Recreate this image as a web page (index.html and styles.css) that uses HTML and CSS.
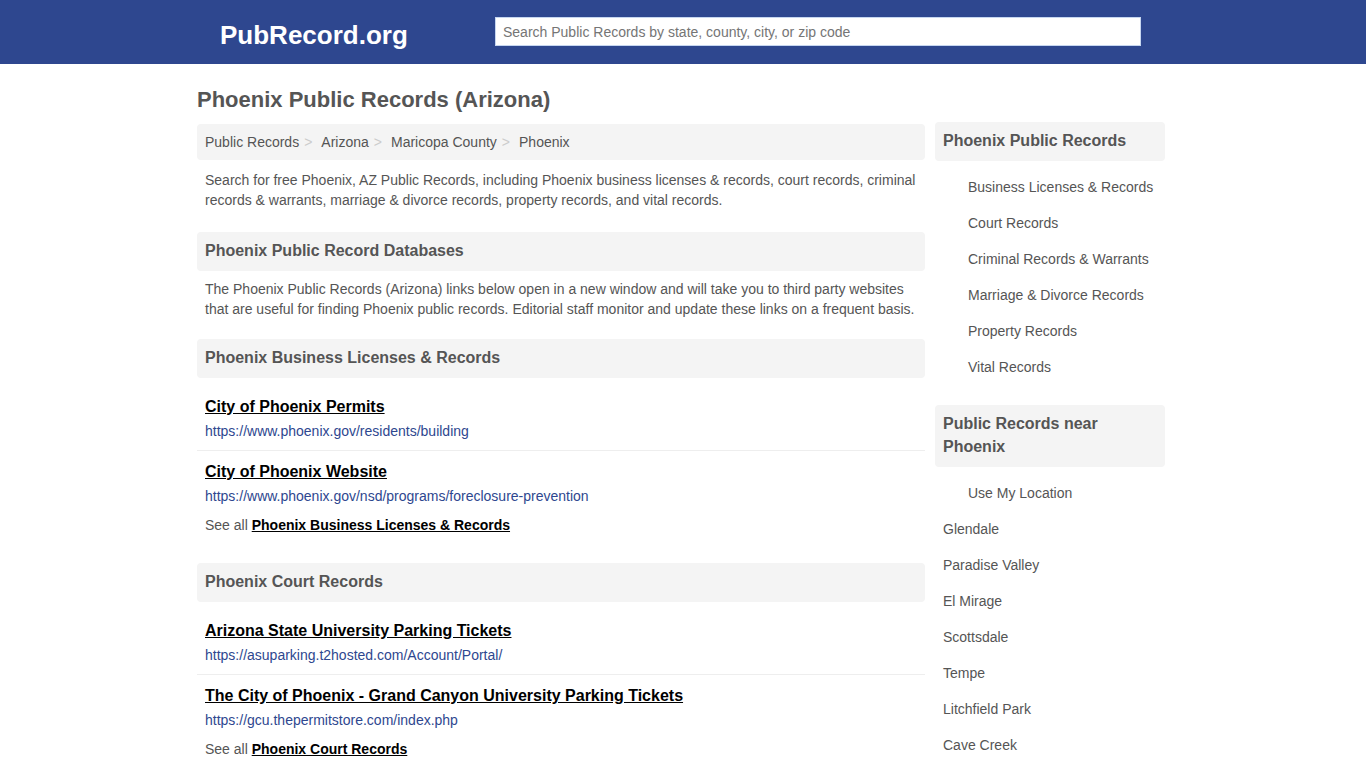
FILE: index.html
```html
<!DOCTYPE html>
<html lang="en">
<head>
<meta charset="utf-8">
<meta name="viewport" content="width=device-width, initial-scale=1">
<title>Phoenix Public Records (Arizona)</title>
<link rel="stylesheet" href="styles.css">
</head>
<body>
<header class="site-header">
  <div class="container header-row">
    <a class="logo" href="#">PubRecord.org</a>
    <form class="search" role="search">
      <input class="search-input" type="search" aria-label="Search Public Records" placeholder="Search Public Records by state, county, city, or zip code">
    </form>
  </div>
</header>
<div class="container page">
  <main class="main">
    <h1 class="page-title">Phoenix Public Records (Arizona)</h1>
    <nav aria-label="Breadcrumb">
      <ol class="breadcrumb">
        <li class="crumb"><a href="#">Public Records</a></li>
        <li class="crumb"><a href="#">Arizona</a></li>
        <li class="crumb"><a href="#">Maricopa County</a></li>
        <li class="crumb"><a href="#">Phoenix</a></li>
      </ol>
    </nav>
    <p class="text intro">Search for free Phoenix, AZ Public Records, including Phoenix business licenses &amp; records, court records, criminal records &amp; warrants, marriage &amp; divorce records, property records, and vital records.</p>
    <section class="section">
      <h2 class="heading">Phoenix Public Record Databases</h2>
      <p class="text">The Phoenix Public Records (Arizona) links below open in a new window and will take you to third party websites that are useful for finding Phoenix public records. Editorial staff monitor and update these links on a frequent basis.</p>
    </section>
    <section class="section">
      <h2 class="heading">Phoenix Business Licenses &amp; Records</h2>
      <ul class="records">
        <li class="record"><a class="record-title" href="#">City of Phoenix Permits</a><span class="record-url">https://www.phoenix.gov/residents/building</span></li>
        <li class="record"><a class="record-title" href="#">City of Phoenix Website</a><span class="record-url">https://www.phoenix.gov/nsd/programs/foreclosure-prevention</span></li>
      </ul>
      <p class="see-all">See all <a href="#">Phoenix Business Licenses &amp; Records</a></p>
    </section>
    <section class="section">
      <h2 class="heading">Phoenix Court Records</h2>
      <ul class="records">
        <li class="record"><a class="record-title" href="#">Arizona State University Parking Tickets</a><span class="record-url">https://asuparking.t2hosted.com/Account/Portal/</span></li>
        <li class="record"><a class="record-title" href="#">The City of Phoenix - Grand Canyon University Parking Tickets</a><span class="record-url">https://gcu.thepermitstore.com/index.php</span></li>
      </ul>
      <p class="see-all">See all <a href="#">Phoenix Court Records</a></p>
    </section>
  </main>
  <aside class="sidebar">
    <nav aria-labelledby="side-records">
      <h2 class="heading" id="side-records">Phoenix Public Records</h2>
      <ul class="side-list">
        <li><a class="side-link indented" href="#">Business Licenses &amp; Records</a></li>
        <li><a class="side-link indented" href="#">Court Records</a></li>
        <li><a class="side-link indented" href="#">Criminal Records &amp; Warrants</a></li>
        <li><a class="side-link indented" href="#">Marriage &amp; Divorce Records</a></li>
        <li><a class="side-link indented" href="#">Property Records</a></li>
        <li><a class="side-link indented" href="#">Vital Records</a></li>
      </ul>
    </nav>
    <nav aria-labelledby="side-near">
      <h2 class="heading" id="side-near">Public Records near Phoenix</h2>
      <ul class="side-list">
        <li><a class="side-link indented" href="#">Use My Location</a></li>
        <li><a class="side-link" href="#">Glendale</a></li>
        <li><a class="side-link" href="#">Paradise Valley</a></li>
        <li><a class="side-link" href="#">El Mirage</a></li>
        <li><a class="side-link" href="#">Scottsdale</a></li>
        <li><a class="side-link" href="#">Tempe</a></li>
        <li><a class="side-link" href="#">Litchfield Park</a></li>
        <li><a class="side-link" href="#">Cave Creek</a></li>
      </ul>
    </nav>
  </aside>
</div>
</body>
</html>
```
FILE: styles.css
```css
* {
  box-sizing: border-box;
}

body {
  margin: 0;
  background: #fff;
  color: #555;
  font: 14px/20px "Liberation Sans", Arial, sans-serif;
}

h1, h2, p, ul, ol {
  margin: 0;
  padding: 0;
}

ul, ol {
  list-style: none;
}

a {
  color: inherit;
  text-decoration: none;
}

.container {
  max-width: 972px;
  margin: 0 auto;
  padding-right: 4px;
}

.site-header {
  background: #2e478f;
}

.header-row {
  display: flex;
  align-items: flex-start;
  padding: 17px 28px 14px 23px;
}

.logo {
  flex: 1;
  padding-top: 3px;
  color: #fff;
  font-size: 26px;
  font-weight: bold;
  line-height: 30px;
}

.search {
  flex: 0 1 646px;
}

.search-input {
  display: block;
  width: 100%;
  height: 29px;
  padding: 1px 7px 0;
  border: 1px solid #c6d6f0;
  border-radius: 0;
  background: #fff;
  color: #555;
  font: inherit;
  appearance: none;
}

.search-input::placeholder {
  color: #757575;
}

.page {
  display: flex;
  align-items: flex-start;
  gap: 10px;
}

.main {
  flex: 1;
  min-width: 0;
  padding-top: 22px;
}

.page-title {
  margin-bottom: 10px;
  font-size: 22px;
  line-height: 28px;
}

.breadcrumb {
  display: flex;
  flex-wrap: wrap;
  padding: 8px;
  border-radius: 4px;
  background: #f4f4f4;
}

.crumb:not(:last-child)::after {
  content: ">";
  padding: 0 9px 0 5px;
  color: #ccc;
}

.text {
  padding: 0 8px;
}

.intro {
  margin: 10px 0 22px;
}

.section {
  margin-bottom: 20px;
}

.section:has(.see-all) {
  margin-bottom: 28px;
}

.section:last-child {
  margin-bottom: 8px;
}

.heading {
  margin-bottom: 8px;
  padding: 7px 8px 9px;
  border-radius: 4px;
  background: #f4f4f4;
  font-size: 16px;
  line-height: 23px;
}

.record {
  display: flex;
  flex-direction: column;
  align-items: flex-start;
  gap: 3px;
  padding: 9px 8px;
}

.record:not(:last-child) {
  border-bottom: 1px solid #eee;
}

.record-title {
  color: #000;
  font-size: 16px;
  font-weight: bold;
  line-height: 23px;
  text-decoration: underline;
}

.record-url {
  color: #2e478f;
}

.see-all {
  padding: 0 8px;
}

.see-all a {
  color: #000;
  font-weight: bold;
  text-decoration: underline;
}

.sidebar {
  flex: 0 0 230px;
  padding-top: 58px;
}

.side-list {
  margin-bottom: 20px;
}

.sidebar nav:last-child .side-list {
  margin-bottom: 0;
}

.side-link {
  display: block;
  padding: 8px;
}

.indented {
  padding-left: 33px;
}

@media (max-width: 760px) {
  .page {
    flex-direction: column;
    padding: 0 8px;
  }

  .main {
    flex: none;
    width: 100%;
  }

  .sidebar {
    flex: none;
    width: 100%;
    padding-top: 0;
  }
}
```
